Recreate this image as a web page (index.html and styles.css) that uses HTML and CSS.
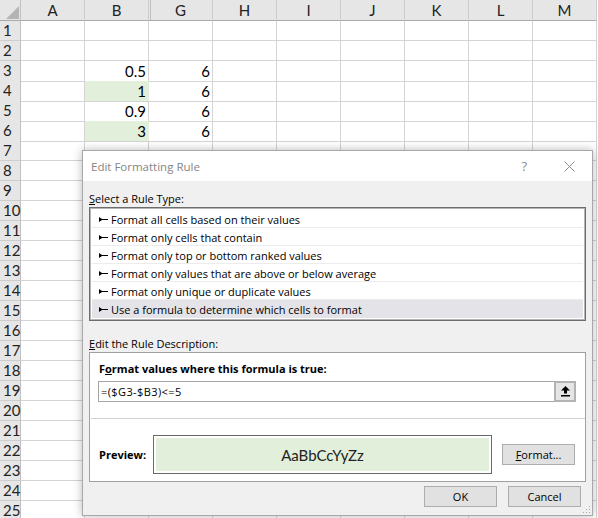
FILE: index.html
```html
<!DOCTYPE html>
<html lang="en">
<head>
    <meta charset="UTF-8">
    <title>Edit Formatting Rule</title>
    <link rel="stylesheet" href="styles.css">
</head>
<body>

    <!-- Worksheet behind the dialog -->
    <div class="sheet">
        <div class="row head">
            <div class="corner"><svg width="20" height="20"><polygon points="6,19 19,19 19,6" fill="#b4b4b4"/></svg></div>
            <div>A</div><div>B</div><div class="hid">G</div><div>H</div><div>I</div><div>J</div><div>K</div><div>L</div><div>M</div>
        </div>
        <div class="row"><div class="rh">1</div><div></div><div></div><div></div><div></div><div></div><div></div><div></div><div></div><div></div></div>
        <div class="row"><div class="rh">2</div><div></div><div></div><div></div><div></div><div></div><div></div><div></div><div></div><div></div></div>
        <div class="row"><div class="rh">3</div><div></div><div class="num">0.5</div><div class="num">6</div><div></div><div></div><div></div><div></div><div></div><div></div></div>
        <div class="row"><div class="rh">4</div><div></div><div class="num fill">1</div><div class="num">6</div><div></div><div></div><div></div><div></div><div></div><div></div></div>
        <div class="row"><div class="rh">5</div><div></div><div class="num">0.9</div><div class="num">6</div><div></div><div></div><div></div><div></div><div></div><div></div></div>
        <div class="row"><div class="rh">6</div><div></div><div class="num fill">3</div><div class="num">6</div><div></div><div></div><div></div><div></div><div></div><div></div></div>
        <div class="row"><div class="rh">7</div><div></div><div></div><div></div><div></div><div></div><div></div><div></div><div></div><div></div></div>
        <div class="row"><div class="rh">8</div><div></div><div></div><div></div><div></div><div></div><div></div><div></div><div></div><div></div></div>
        <div class="row"><div class="rh">9</div><div></div><div></div><div></div><div></div><div></div><div></div><div></div><div></div><div></div></div>
        <div class="row"><div class="rh">10</div><div></div><div></div><div></div><div></div><div></div><div></div><div></div><div></div><div></div></div>
        <div class="row"><div class="rh">11</div><div></div><div></div><div></div><div></div><div></div><div></div><div></div><div></div><div></div></div>
        <div class="row"><div class="rh">12</div><div></div><div></div><div></div><div></div><div></div><div></div><div></div><div></div><div></div></div>
        <div class="row"><div class="rh">13</div><div></div><div></div><div></div><div></div><div></div><div></div><div></div><div></div><div></div></div>
        <div class="row"><div class="rh">14</div><div></div><div></div><div></div><div></div><div></div><div></div><div></div><div></div><div></div></div>
        <div class="row"><div class="rh">15</div><div></div><div></div><div></div><div></div><div></div><div></div><div></div><div></div><div></div></div>
        <div class="row"><div class="rh">16</div><div></div><div></div><div></div><div></div><div></div><div></div><div></div><div></div><div></div></div>
        <div class="row"><div class="rh">17</div><div></div><div></div><div></div><div></div><div></div><div></div><div></div><div></div><div></div></div>
        <div class="row"><div class="rh">18</div><div></div><div></div><div></div><div></div><div></div><div></div><div></div><div></div><div></div></div>
        <div class="row"><div class="rh">19</div><div></div><div></div><div></div><div></div><div></div><div></div><div></div><div></div><div></div></div>
        <div class="row"><div class="rh">20</div><div></div><div></div><div></div><div></div><div></div><div></div><div></div><div></div><div></div></div>
        <div class="row"><div class="rh">21</div><div></div><div></div><div></div><div></div><div></div><div></div><div></div><div></div><div></div></div>
        <div class="row"><div class="rh">22</div><div></div><div></div><div></div><div></div><div></div><div></div><div></div><div></div><div></div></div>
        <div class="row"><div class="rh">23</div><div></div><div></div><div></div><div></div><div></div><div></div><div></div><div></div><div></div></div>
        <div class="row"><div class="rh">24</div><div></div><div></div><div></div><div></div><div></div><div></div><div></div><div></div><div></div></div>
        <div class="row"><div class="rh">25</div><div></div><div></div><div></div><div></div><div></div><div></div><div></div><div></div><div></div></div>
    </div>

    <!-- Dialog window -->
    <div class="dialog">
        <div class="titlebar">
            <span class="title">Edit Formatting Rule</span>
            <span class="help">?</span>
            <svg class="close" width="11" height="11"><path d="M0.5 0.5 L10.5 10.5 M10.5 0.5 L0.5 10.5" stroke="#8c8c8c" stroke-width="1"/></svg>
        </div>

        <div class="dlg-body">
            <div class="label"><u>S</u>elect a Rule Type:</div>
            <ul class="rules">
                <li><svg class="tick" width="9" height="7"><polygon points="0,1 3,3 9,3 9,4 3,4 0,6" fill="#000"/></svg>Format all cells based on their values</li>
                <li><svg class="tick" width="9" height="7"><polygon points="0,1 3,3 9,3 9,4 3,4 0,6" fill="#000"/></svg>Format only cells that contain</li>
                <li><svg class="tick" width="9" height="7"><polygon points="0,1 3,3 9,3 9,4 3,4 0,6" fill="#000"/></svg>Format only top or bottom ranked values</li>
                <li><svg class="tick" width="9" height="7"><polygon points="0,1 3,3 9,3 9,4 3,4 0,6" fill="#000"/></svg>Format only values that are above or below average</li>
                <li><svg class="tick" width="9" height="7"><polygon points="0,1 3,3 9,3 9,4 3,4 0,6" fill="#000"/></svg>Format only unique or duplicate values</li>
                <li class="sel"><svg class="tick" width="9" height="7"><polygon points="0,1 3,3 9,3 9,4 3,4 0,6" fill="#000"/></svg>Use a formula to determine which cells to format</li>
            </ul>

            <div class="label desc-label"><u>E</u>dit the Rule Description:</div>
            <div class="desc">
                <div class="desc-top">
                    <div class="desc-head">F<u>o</u>rmat values where this formula is true:</div>
                    <div class="formula">
                        <span class="formula-text">=($G3-$B3)&lt;=5</span>
                        <span class="ref-btn"><svg width="9" height="11"><path d="M4.5 0 L9 4.5 L6 4.5 L6 7.5 L3 7.5 L3 4.5 L0 4.5 Z" fill="#000"/><rect x="0" y="9" width="9" height="1.5" fill="#000"/></svg></span>
                    </div>
                </div>
                <div class="sep"></div>
                <div class="preview-row">
                    <span class="preview-label">Preview:</span>
                    <div class="preview"><div class="preview-fill">AaBbCcYyZz</div></div>
                    <button class="btn fmt-btn"><u>F</u>ormat...</button>
                </div>
            </div>

            <div class="actions">
                <button class="btn">OK</button>
                <button class="btn">Cancel</button>
            </div>
        </div>

        <svg class="grip" width="8" height="8">
            <rect x="6" y="0" width="1" height="1" fill="#a8a8a8"/>
            <rect x="3" y="3" width="1" height="1" fill="#a8a8a8"/>
            <rect x="6" y="3" width="1" height="1" fill="#a8a8a8"/>
            <rect x="0" y="6" width="1" height="1" fill="#a8a8a8"/>
            <rect x="3" y="6" width="1" height="1" fill="#a8a8a8"/>
            <rect x="6" y="6" width="1" height="1" fill="#a8a8a8"/>
        </svg>
    </div>

</body>
</html>
```

FILE: styles.css
```css
* {
    box-sizing: border-box;
}
body {
    margin: 0;
    width: 598px;
    height: 518px;
    overflow: hidden;
    position: relative;
    background-color: #fff;
    font-family: Lato, "Liberation Sans", sans-serif;
}
/* Worksheet */
.row {
    display: grid;
    grid-template-columns: 21px repeat(9, 64px);
    height: 20px;
}
.row > div {
    border-right: 1px solid #d4d4d4;
    border-bottom: 1px solid #d4d4d4;
    font-size: 15px;
    line-height: 19px;
    color: #000;
}
.row.head {
    height: 21px;
}
.head > div {
    background-color: #e6e6e6;
    border-right-color: #cdcdcd;
    border-bottom-color: #ababab;
    text-align: center;
    line-height: 20px;
    color: #222;
}
.head .corner {
    border-right-color: #c0c0c0;
}
.head .corner svg {
    display: block;
}
.head .hid {
    box-shadow: inset 1px 0 0 #e6e6e6, inset 2px 0 0 #c0c0c0;
}
.row .rh {
    background-color: #e6e6e6;
    border-right-color: #c0c0c0;
    border-bottom-color: #cdcdcd;
    padding-left: 3px;
    color: #222;
}
.row .num {
    text-align: right;
    padding-right: 2px;
    padding-top: 1px;
}
.row .fill {
    background-color: #e2efda;
    border-right-color: #e2efda;
}
/* Dialog */
.dialog {
    position: absolute;
    left: 82px;
    top: 150px;
    width: 511px;
    height: 366px;
    border: 1px solid #a8a8a8;
    background-color: #f0f0f0;
    box-shadow: 0 0 9px rgba(0, 0, 0, 0.28);
    font-family: "Open Sans", "Noto Sans", sans-serif;
    font-size: 11px;
    color: #000;
}
.titlebar {
    height: 30px;
    background-color: #fff;
    display: flex;
    align-items: center;
    padding-left: 8px;
}
.title {
    flex: 1;
    font-size: 11.5px;
    color: #858585;
}
.help {
    font-size: 13px;
    color: #8c8c8c;
    margin-right: 37px;
}
.close {
    margin-right: 17px;
}
.dlg-body {
    padding: 9px 6px 0 6px;
}
.label {
    height: 17px;
    line-height: 17px;
}
.desc-label {
    margin-top: 14px;
}
.rules {
    list-style: none;
    margin: 0;
    padding: 2px;
    border: 1px solid #6d6d6d;
    box-shadow: inset 0 0 0 1px #b4b4b4;
    background-color: #fff;
}
.rules li {
    height: 18px;
    line-height: 17px;
    padding-left: 7px;
    padding-top: 2px;
    border-bottom: 1px solid #ececec;
    display: flex;
    align-items: center;
}
.rules li.sel {
    background-color: #e3e3e8;
    border-bottom-color: transparent;
}
.tick {
    margin-right: 3px;
}
.desc {
    border: 1px solid #a0a0a0;
    background-color: #fff;
}
.desc-top {
    padding: 7px 9px 16px 8px;
}
.desc-head {
    height: 17px;
    line-height: 17px;
    padding-left: 1px;
    font-weight: bold;
}
.formula {
    display: flex;
    height: 21px;
    margin-top: 4px;
}
.formula-text {
    flex: 1;
    border: 1px solid #a5a5a5;
    border-right: none;
    padding-left: 2px;
    line-height: 19px;
    letter-spacing: 0.4px;
}
.ref-btn {
    width: 22px;
    border: 2px solid #b3b3b3;
    background-color: #e5e5e5;
    display: flex;
    align-items: center;
    justify-content: center;
}
.ref-btn svg {
    display: block;
}
.sep {
    height: 1px;
    margin-left: 1px;
    background-color: #d2d2d2;
}
.preview-row {
    display: flex;
    align-items: center;
    padding: 16px 0 7px 9px;
}
.preview-label {
    width: 54px;
    font-weight: bold;
}
.preview {
    width: 339px;
    height: 39px;
    border: 1px solid #6a6a6a;
    padding: 2px;
    background-color: #fff;
}
.preview-fill {
    height: 100%;
    background-color: #e2efda;
    display: flex;
    align-items: center;
    justify-content: center;
    font-family: Lato, "Liberation Sans", sans-serif;
    font-size: 15px;
    color: #222;
}
.btn {
    width: 73px;
    height: 21px;
    padding: 0;
    background-color: #e1e1e1;
    border: 1px solid #adadad;
    font-family: "Open Sans", "Noto Sans", sans-serif;
    font-size: 11px;
    color: #000;
}
.fmt-btn {
    margin-left: 10px;
}
.actions {
    display: flex;
    justify-content: flex-end;
    gap: 11px;
    margin-top: 4px;
    padding-right: 5px;
}
.grip {
    position: absolute;
    right: 1px;
    bottom: 1px;
}
```
